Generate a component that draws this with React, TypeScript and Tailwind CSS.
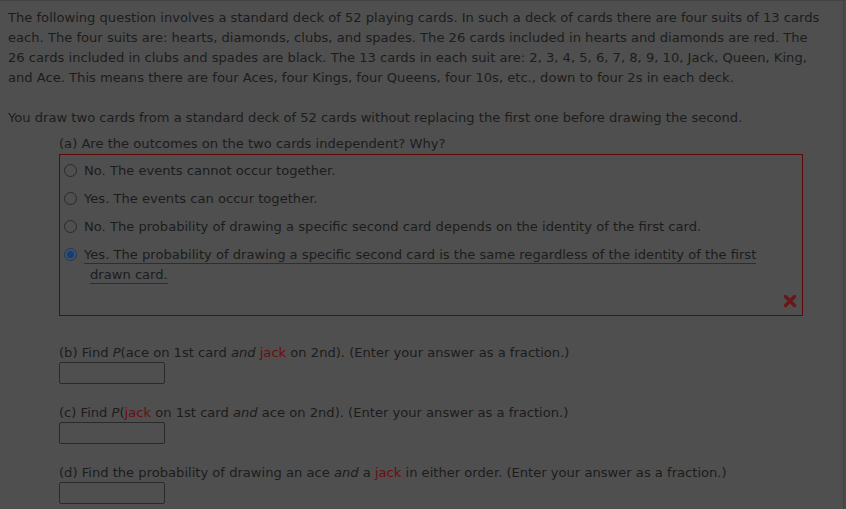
import React from "react";

const font = { fontFamily: '"DejaVu Sans", Verdana, sans-serif' };

function Radio({ checked }: { checked?: boolean }) {
  return checked ? (
    <span className="mt-[3px] flex h-[13px] w-[13px] shrink-0 items-center justify-center rounded-full border border-[#123a6e] bg-[#4f4f4f]">
      <span className="h-[7px] w-[7px] rounded-full bg-[#0e3e80]" />
    </span>
  ) : (
    <span className="mt-[3px] h-[13px] w-[13px] shrink-0 rounded-full border border-[#2a2a2a] bg-[#4f4f4f]" />
  );
}

function Option({ text, checked }: { text: React.ReactNode; checked?: boolean }) {
  return (
    <div className="flex items-start gap-[7px] pl-[4px]">
      <Radio checked={checked} />
      <div className="leading-[20px]">{text}</div>
    </div>
  );
}

function Question({ children, first }: { children: React.ReactNode; first?: boolean }) {
  return (
    <div className={first ? "mt-[28px]" : "mt-[20px]"}>
      <div className="leading-[18px]">{children}</div>
      <div className="h-[22px] w-[106px] rounded-[2px] border border-[#2a2a2a]" />
    </div>
  );
}

export default function App() {
  return (
    <div className="h-[509px] w-[846px] overflow-hidden bg-[#4a4a4a]" style={font}>
      <div className="h-full w-[844px] border-t border-r border-[#434343] bg-[#4f4f4f] px-[8px] pt-[7px] text-[13.1px] text-[#1c1c1c]">
        <p className="whitespace-nowrap leading-[20px]">
          The following question involves a standard deck of 52 playing cards. In such a deck of cards there are four suits of 13 cards
          <br />
          each. The four suits are: hearts, diamonds, clubs, and spades. The 26 cards included in hearts and diamonds are red. The
          <br />
          26 cards included in clubs and spades are black. The 13 cards in each suit are: 2, 3, 4, 5, 6, 7, 8, 9, 10, Jack, Queen, King,
          <br />
          and Ace. This means there are four Aces, four Kings, four Queens, four 10s, etc., down to four 2s in each deck.
        </p>
        <p className="mt-[20px] leading-[20px]">
          You draw two cards from a standard deck of 52 cards without replacing the first one before drawing the second.
        </p>
        <div className="ml-[51px] mt-[6px] w-[744px]">
          <div className="leading-[20px]">(a) Are the outcomes on the two cards independent? Why?</div>
          <div className="relative h-[162px] border border-[#5e0808] pt-[6px]">
            <div className="flex flex-col gap-[8px]">
              <Option text="No. The events cannot occur together." />
              <Option text="Yes. The events can occur together." />
              <Option text="No. The probability of drawing a specific second card depends on the identity of the first card." />
              <div className="flex items-start gap-[7px] pl-[4px]">
                <Radio checked />
                <div className="leading-[20px]">
                  <span className="border-b border-[#2e2e2e] pb-[1px]">
                    Yes. The probability of drawing a specific second card is the same regardless of the identity of the first
                  </span>
                  <br />
                  <span className="ml-[6px] border-b border-[#2e2e2e] pb-[1px]">drawn card.</span>
                </div>
              </div>
            </div>
            <svg className="absolute bottom-[7px] right-[5px]" width="14" height="14" viewBox="0 0 14 14">
              <path d="M2.5 2.5 L11.5 11.5 M11.5 2.5 L2.5 11.5" stroke="#6a1717" strokeWidth="3.4" strokeLinecap="round" />
            </svg>
          </div>
          <Question first>
            (b) Find <i>P</i>(ace on 1st card <i>and</i> <span className="text-[#6a0e0e]">jack</span> on 2nd). (Enter your answer as a fraction.)
          </Question>
          <Question>
            (c) Find <i>P</i>(<span className="text-[#6a0e0e]">jack</span> on 1st card <i>and</i> ace on 2nd). (Enter your answer as a fraction.)
          </Question>
          <Question>
            (d) Find the probability of drawing an ace <i>and</i> a <span className="text-[#6a0e0e]">jack</span> in either order. (Enter your answer as a fraction.)
          </Question>
        </div>
      </div>
    </div>
  );
}
